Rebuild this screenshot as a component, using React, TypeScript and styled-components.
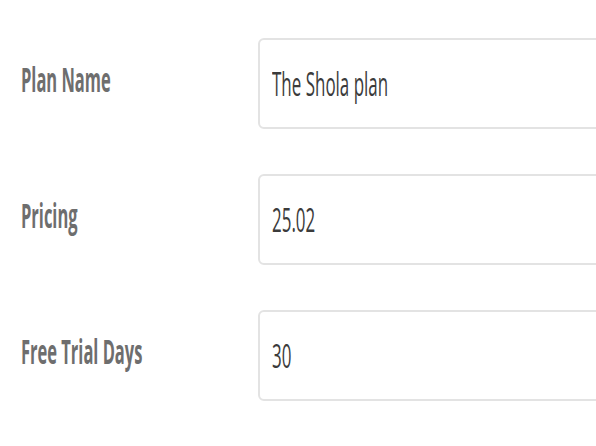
import styled, { createGlobalStyle } from 'styled-components';

const Global = createGlobalStyle`
  html, body {
    margin: 0;
    padding: 0;
    background: #ffffff;
    overflow: hidden;
  }
  body {
    font-family: "Open Sans", "Liberation Sans", sans-serif;
  }
`;

const Form = styled.form`
  display: flex;
  flex-direction: column;
  gap: 45px;
  padding: 38px 0 0 21px;
  width: 620px;
`;

const Row = styled.div`
  display: grid;
  grid-template-columns: 237px 1fr;
  align-items: center;
`;

const Label = styled.label`
  color: #6e6e6e;
  font-weight: 700;
  font-size: 34px;
  line-height: 1;
  margin-top: -10px;
  white-space: nowrap;
`;

const Field = styled.div`
  height: 91px;
  box-sizing: border-box;
  border: 2px solid #e3e3e3;
  border-radius: 6px;
  background: #fff;
  display: flex;
  align-items: center;
  padding-left: 12px;
`;

const Squeeze = styled.span<{ $scale: number }>`
  display: inline-block;
  white-space: nowrap;
  transform: scaleX(${(p) => p.$scale});
  transform-origin: left center;
`;

const Value = styled(Squeeze)`
  color: #3b3b3b;
  font-size: 33px;
  font-weight: 400;
  line-height: 1;
`;

const rows = [
  { label: 'Plan Name', value: 'The Shola plan' },
  { label: 'Pricing', value: '25.02' },
  { label: 'Free Trial Days', value: '30' },
];

const App = () => {
  return (
    <>
      <Global />
      <Form onSubmit={(e) => e.preventDefault()}>
        {rows.map((r) => (
          <Row key={r.label}>
            <Label>
              <Squeeze $scale={0.485}>{r.label}</Squeeze>
            </Label>
            <Field>
              <Value $scale={0.514}>{r.value}</Value>
            </Field>
          </Row>
        ))}
      </Form>
    </>
  );
};

export default App;
